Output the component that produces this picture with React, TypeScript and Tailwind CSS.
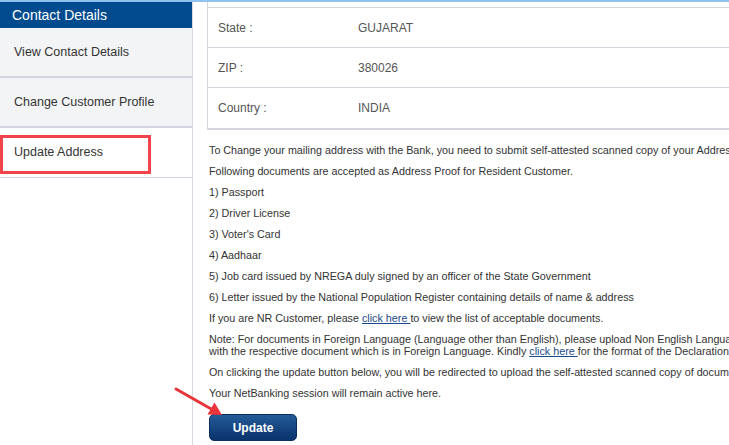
import React from "react";

const rows = [
  { label: "State :", value: "GUJARAT" },
  { label: "ZIP :", value: "380026" },
  { label: "Country :", value: "INDIA" },
];

function Link({ children }: { children: React.ReactNode }) {
  return <span className="text-[#1b4a8a] underline">{children}</span>;
}

export default function App() {
  return (
    <div
      className="relative w-[729px] h-[445px] overflow-hidden bg-white"
      style={{ fontFamily: '"Liberation Sans", Arial, sans-serif' }}
    >
      <div className="h-[2px] bg-[#8fc2ee]" />
      <div className="flex h-[443px]">
        {/* Sidebar */}
        <aside className="w-[193px] shrink-0 border-r border-[#d9dce5] flex flex-col">
          <div className="h-[26px] bg-[#004b8d] text-white text-[14px] pl-[12px] flex items-center">
            Contact Details
          </div>
          <div className="h-[48px] bg-[#f3f4f6] pl-[14px] flex items-center text-[12.5px] text-[#333]">
            View Contact Details
          </div>
          <div className="h-[2px] bg-[#d3d6e0]" />
          <div className="h-[48px] bg-[#f3f4f6] pl-[14px] flex items-center text-[12.5px] text-[#333]">
            Change Customer Profile
          </div>
          <div className="h-[2px] bg-[#d3d6e0]" />
          <div className="h-[49px] bg-white pl-[14px] flex items-center text-[12.5px] text-[#333]">
            Update Address
          </div>
          <div className="h-[1px] bg-[#d3d6e0]" />
        </aside>

        {/* Main */}
        <main className="flex-1 overflow-hidden">
          <div className="w-[760px] ml-[14px]">
            <div className="h-[5px] border-l border-[#d5d6dd]" />
            <div className="border-l border-t border-b-2 border-[#d5d6dd]">
              {rows.map((r, i) => (
                <div
                  key={r.label}
                  className={`h-[40px] flex items-center text-[12px] text-[#555] ${
                    i < rows.length - 1 ? "border-b border-[#d5d6dd]" : ""
                  }`}
                >
                  <div className="w-[150px] pl-[10px]">{r.label}</div>
                  <div>{r.value}</div>
                </div>
              ))}
            </div>
          </div>

          <div className="w-[760px] ml-[16px] mt-[14px] text-[10.75px] leading-[12px] text-[#333] whitespace-nowrap flex flex-col gap-[9px]">
            <p>
              To Change your mailing address with the Bank, you need to submit self-attested scanned copy of your Address Proof.
            </p>
            <p>Following documents are accepted as Address Proof for Resident Customer.</p>
            <p>1) Passport</p>
            <p>2) Driver License</p>
            <p>3) Voter's Card</p>
            <p>4) Aadhaar</p>
            <p>5) Job card issued by NREGA duly signed by an officer of the State Government</p>
            <p>6) Letter issued by the National Population Register containing details of name &amp; address</p>
            <p>
              If you are NR Customer, please <Link>click here </Link>to view the list of acceptable documents.
            </p>
            <p>
              Note: For documents in Foreign Language (Language other than English), please upload Non English Language Declaration
              <br />
              with the respective document which is in Foreign Language. Kindly <Link>click here </Link>for the format of the Declaration.
            </p>
            <p>
              On clicking the update button below, you will be redirected to upload the self-attested scanned copy of documents.
            </p>
            <p>Your NetBanking session will remain active here.</p>
          </div>

          <div className="ml-[16px] mt-[15px]">
            <button className="w-[88px] h-[27px] rounded-[5px] bg-gradient-to-b from-[#235b98] to-[#0a336b] border border-[#0a2e5e] text-white font-bold text-[12px]">
              Update
            </button>
          </div>
        </main>
      </div>

      {/* Red highlight box */}
      <div className="absolute left-0 top-[135px] w-[151px] h-[39px] border-[3px] border-[#f2444a]" />

      {/* Red arrow */}
      <svg className="absolute left-[160px] top-[375px]" width="70" height="50" viewBox="160 375 70 50">
        <line x1="176" y1="389" x2="213" y2="410" stroke="#e9353b" strokeWidth="3" strokeLinecap="round" />
        <polygon points="222,415 207.5,414.5 214.5,402.5" fill="#e9353b" />
      </svg>
    </div>
  );
}
